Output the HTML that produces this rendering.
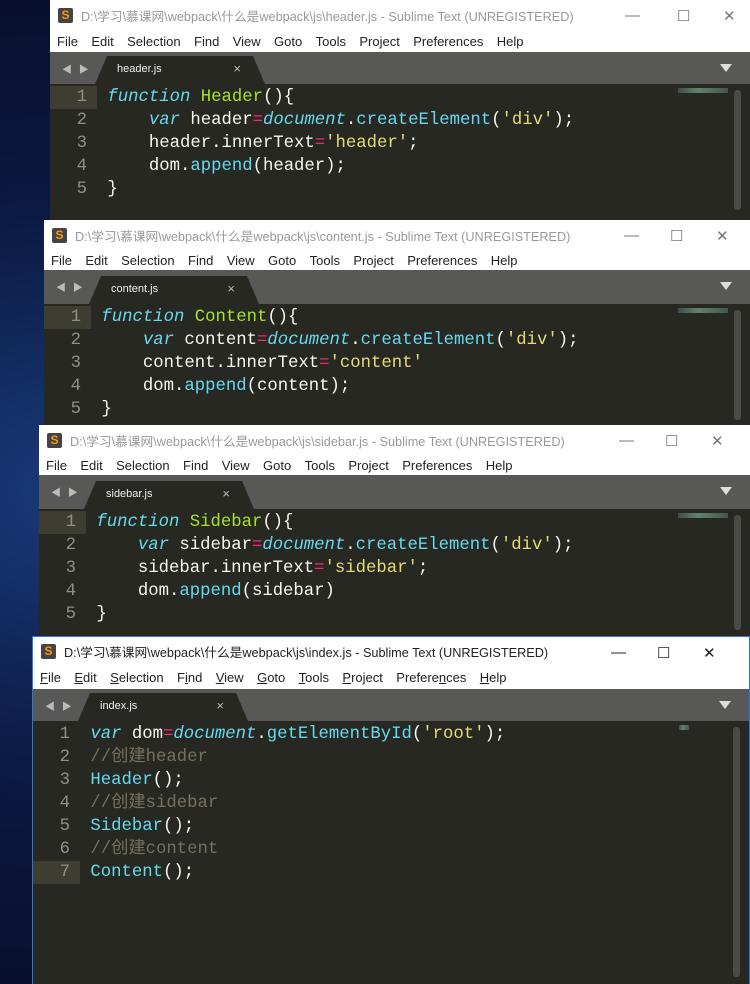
<!DOCTYPE html>
<html><head><meta charset="utf-8"><style>
*{margin:0;padding:0;box-sizing:border-box}
body{width:750px;height:984px;overflow:hidden;position:relative;background:radial-gradient(ellipse at 10% 50%,#1a3a7a 0%,#0b1a44 40%,#070d26 80%);font-family:"Liberation Sans","Noto Sans CJK SC",sans-serif}
.w{position:absolute;right:0;background:#272822;overflow:hidden}
.t{height:30px;background:#fff;display:flex;align-items:center;color:#999;font-size:12.7px;position:relative}
.t .ic{width:15px;height:15px;background:#444;border-radius:2px;margin:0 8px 0 8px;color:#f90;font-weight:bold;font-size:12px;line-height:15px;text-align:center}
.t .b{position:absolute;top:7px;font-size:15px;color:#777}
.m{height:22px;background:#fff;font-size:13px;color:#222;display:flex;align-items:center;padding-left:7px}
.m span{margin-right:13.4px}
.tb{height:32px;background:#585856;position:relative}
.tb .ar{position:absolute;left:12px;top:9px;color:#bbb;font-size:10px;letter-spacing:2px}
.tb .tab{position:absolute;left:45px;top:4px;width:170px;height:28px;background:#272822;clip-path:polygon(12px 0,calc(100% - 12px) 0,100% 100%,0 100%)}
.tb .tab span{position:absolute;left:22px;top:7px;color:#eee;font-size:11px}
.tb .tab i{position:absolute;right:24px;top:5px;color:#bbb;font-style:normal;font-size:13px}
.tb .dd{position:absolute;right:18px;top:12px;width:0;height:0;border-left:6px solid transparent;border-right:6px solid transparent;border-top:8px solid #ddd}
.c{position:relative;font-family:"Liberation Mono","Noto Sans CJK SC",monospace;font-size:17.3px;color:#f8f8f2;padding-top:2px}
.l{height:23px;line-height:23px;white-space:pre;position:relative}
.n{display:inline-block;width:47px;text-align:right;color:#8f908a;padding-right:10px;height:23px}
.l.cur .n{background:#3e3d32}
.k{color:#66d9ef;font-style:italic}.g{color:#a6e22e}.s{color:#e6db74}.o{color:#f92672}.f{color:#66d9ef}.cm{color:#75715e}
.sb{position:absolute;right:9px;width:7px;background:#4a4a46;border-radius:3px}
.mm{position:absolute;right:22px;width:50px;height:5px;background:linear-gradient(90deg,#556 0,#7a8 40%,#566 100%);opacity:.7}
</style></head><body>

<div class="w" style="left:50px;top:0;height:220px">
<div class="t"><div class="ic">S</div>D:\学习\慕课网\webpack\什么是webpack\js\header.js - Sublime Text (UNREGISTERED)<span class="b" style="left:575px">—</span><span class="b" style="left:627px">☐</span><span class="b" style="left:673px">✕</span></div>
<div class="m"><span>File</span><span>Edit</span><span>Selection</span><span>Find</span><span>View</span><span>Goto</span><span>Tools</span><span>Project</span><span>Preferences</span><span>Help</span></div>
<div class="tb"><div class="ar">◀ ▶</div><div class="tab"><span>header.js</span><i>×</i></div><div class="dd"></div></div>
<div class="c"><div class="mm" style="top:4px"></div><div class="sb" style="top:6px;height:120px"></div>
<div class="l cur"><span class="n">1</span> <span class="k">function</span> <span class="g">Header</span>(){</div>
<div class="l"><span class="n">2</span>     <span class="k">var</span> header<span class="o">=</span><span class="k">document</span>.<span class="f">createElement</span>(<span class="s">'div'</span>);</div>
<div class="l"><span class="n">3</span>     header.innerText<span class="o">=</span><span class="s">'header'</span>;</div>
<div class="l"><span class="n">4</span>     dom.<span class="f">append</span>(header);</div>
<div class="l"><span class="n">5</span> }</div>
</div></div>

<div class="w" style="left:44px;top:220px;height:205px">
<div class="t"><div class="ic">S</div>D:\学习\慕课网\webpack\什么是webpack\js\content.js - Sublime Text (UNREGISTERED)<span class="b" style="left:580px">—</span><span class="b" style="left:626px">☐</span><span class="b" style="left:672px">✕</span></div>
<div class="m" style="height:20px"><span>File</span><span>Edit</span><span>Selection</span><span>Find</span><span>View</span><span>Goto</span><span>Tools</span><span>Project</span><span>Preferences</span><span>Help</span></div>
<div class="tb" style="height:34px"><div class="ar">◀ ▶</div><div class="tab" style="top:6px"><span>content.js</span><i>×</i></div><div class="dd"></div></div>
<div class="c"><div class="mm" style="top:4px"></div><div class="sb" style="top:6px;height:110px"></div>
<div class="l cur"><span class="n">1</span> <span class="k">function</span> <span class="g">Content</span>(){</div>
<div class="l"><span class="n">2</span>     <span class="k">var</span> content<span class="o">=</span><span class="k">document</span>.<span class="f">createElement</span>(<span class="s">'div'</span>);</div>
<div class="l"><span class="n">3</span>     content.innerText<span class="o">=</span><span class="s">'content'</span></div>
<div class="l"><span class="n">4</span>     dom.<span class="f">append</span>(content);</div>
<div class="l"><span class="n">5</span> }</div>
</div></div>

<div class="w" style="left:39px;top:425px;height:211px">
<div class="t"><div class="ic">S</div>D:\学习\慕课网\webpack\什么是webpack\js\sidebar.js - Sublime Text (UNREGISTERED)<span class="b" style="left:580px">—</span><span class="b" style="left:626px">☐</span><span class="b" style="left:672px">✕</span></div>
<div class="m" style="height:20px"><span>File</span><span>Edit</span><span>Selection</span><span>Find</span><span>View</span><span>Goto</span><span>Tools</span><span>Project</span><span>Preferences</span><span>Help</span></div>
<div class="tb" style="height:34px"><div class="ar">◀ ▶</div><div class="tab" style="top:6px"><span>sidebar.js</span><i>×</i></div><div class="dd"></div></div>
<div class="c"><div class="mm" style="top:4px"></div><div class="sb" style="top:6px;height:115px"></div>
<div class="l cur"><span class="n">1</span> <span class="k">function</span> <span class="g">Sidebar</span>(){</div>
<div class="l"><span class="n">2</span>     <span class="k">var</span> sidebar<span class="o">=</span><span class="k">document</span>.<span class="f">createElement</span>(<span class="s">'div'</span>);</div>
<div class="l"><span class="n">3</span>     sidebar.innerText<span class="o">=</span><span class="s">'sidebar'</span>;</div>
<div class="l"><span class="n">4</span>     dom.<span class="f">append</span>(sidebar)</div>
<div class="l"><span class="n">5</span> }</div>
</div></div>

<div class="w" style="left:32px;top:636px;height:348px;border:1px solid #2b79d8;border-bottom:none">
<div class="t" style="height:29px"><div class="ic">S</div><span style="color:#222">D:\学习\慕课网\webpack\什么是webpack\js\index.js - Sublime Text (UNREGISTERED)</span><span class="b" style="left:578px;color:#222">—</span><span class="b" style="left:624px;color:#222">☐</span><span class="b" style="left:670px;color:#222">✕</span></div>
<div class="m" style="height:23px"><span><u>F</u>ile</span><span><u>E</u>dit</span><span><u>S</u>election</span><span>F<u>i</u>nd</span><span><u>V</u>iew</span><span><u>G</u>oto</span><span><u>T</u>ools</span><span><u>P</u>roject</span><span>Prefere<u>n</u>ces</span><span><u>H</u>elp</span></div>
<div class="tb"><div class="ar">◀ ▶</div><div class="tab"><span>index.js</span><i>×</i></div><div class="dd"></div></div>
<div class="c"><div class="mm" style="top:4px;width:10px;right:60px"></div><div class="sb" style="top:6px;height:250px"></div>
<div class="l"><span class="n">1</span> <span class="k">var</span> dom<span class="o">=</span><span class="k">document</span>.<span class="f">getElementById</span>(<span class="s">'root'</span>);</div>
<div class="l"><span class="n">2</span> <span class="cm">//创建header</span></div>
<div class="l"><span class="n">3</span> <span class="f">Header</span>();</div>
<div class="l"><span class="n">4</span> <span class="cm">//创建sidebar</span></div>
<div class="l"><span class="n">5</span> <span class="f">Sidebar</span>();</div>
<div class="l"><span class="n">6</span> <span class="cm">//创建content</span></div>
<div class="l cur"><span class="n">7</span> <span class="f">Content</span>();</div>
</div></div>

</body></html>
